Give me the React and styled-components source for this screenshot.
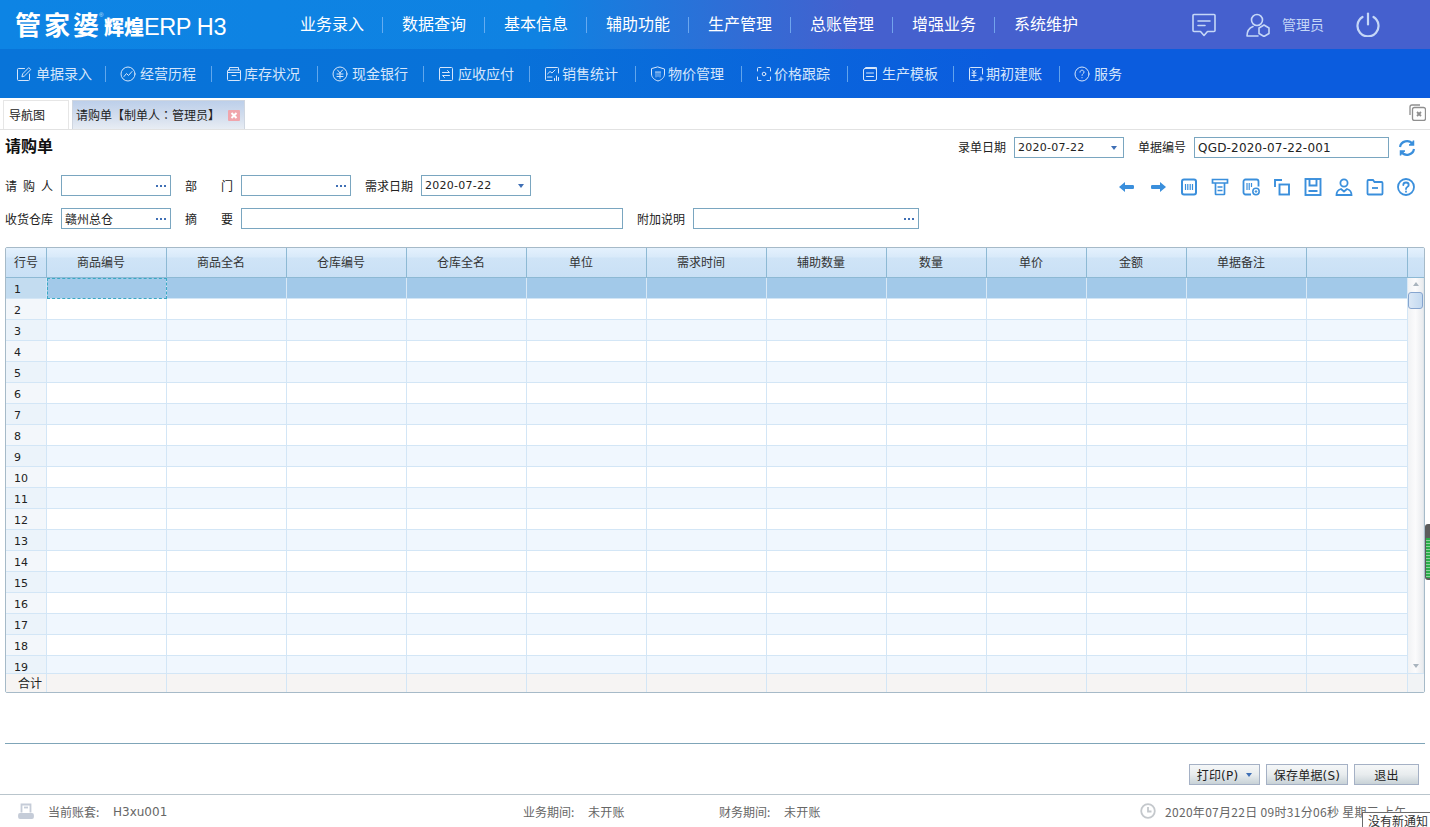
import React from 'react';
import styled, { createGlobalStyle } from 'styled-components';

const GlobalStyle = createGlobalStyle`
  html, body { margin: 0; padding: 0; height: 100%; background: #fff; }
  body { font-family: "DejaVu Sans", "Noto Sans CJK SC", sans-serif; font-size: 12px; color: #222; }
  * { box-sizing: border-box; }
`;

const CJK = `"Noto Sans CJK SC", "DejaVu Sans", sans-serif`;

// --- top bars ---
const Page = styled.div`
  position: relative;
  width: 1430px;
  height: 827px;
  overflow: hidden;
  display: flex;
  flex-direction: column;
`;

const TopBar = styled.header`
  height: 49px;
  flex: none;
  display: flex;
  align-items: center;
  padding-right: 50px;
  background: linear-gradient(90deg, #0d84e4 0%, #0f82e2 38%, #4560ce 60%, #4560ce 100%);
  color: #fff;
`;

const Logo = styled.div`
  position: relative;
  width: 280px;
  padding-left: 15px;
  display: flex;
  align-items: baseline;
  color: #fff;
  font-family: ${CJK};
  white-space: nowrap;
`;

const LogoMain = styled.span`
  font-size: 26px;
  font-weight: 700;
  letter-spacing: 3px;
  line-height: 30px;
`;

const LogoSub = styled.span`
  font-size: 20px;
  font-weight: 900;
  margin-left: 2px;
`;

const LogoProduct = styled.span`
  font-family: "Liberation Sans", sans-serif;
  font-size: 23.5px;
  letter-spacing: -0.4px;
`;

const LogoMark = styled.span`
  position: absolute;
  left: 99px;
  top: 3px;
  font-family: "Liberation Sans", sans-serif;
  font-size: 6px;
  line-height: 7px;
  color: #cfe4fb;
`;

const MainNav = styled.nav`
  display: flex;
  align-items: center;
`;

const MainNavItem = styled.a`
  width: 102px;
  height: 16px;
  padding: 0 0 4px 19px;
  display: flex;
  align-items: center;
  font-family: ${CJK};
  font-size: 16px;
  white-space: nowrap;
  border-left: 1px solid ${(p) => (p.$first ? 'transparent' : 'rgba(130, 185, 245, 0.75)')};
`;

const UserArea = styled.div`
  margin-left: auto;
  display: flex;
  align-items: center;
  color: #c5d7f7;
`;

const UserName = styled.span`
  margin: 0 32px 2px 12px;
  font-family: ${CJK};
  font-size: 14px;
`;

const SubBar = styled.div`
  height: 49px;
  flex: none;
  display: flex;
  align-items: center;
  padding-left: 1px;
  background: linear-gradient(90deg, #0874d9 0%, #0872d9 35%, #0b5cde 70%, #0b5cde 100%);
  color: #d6e6fb;
`;

const SubItem = styled.a`
  width: ${(p) => (p.$first ? 104 : 106)}px;
  height: 16px;
  padding-left: 14px;
  display: flex;
  align-items: center;
  font-family: ${CJK};
  font-size: 14px;
  white-space: nowrap;
  border-left: 1px solid ${(p) => (p.$first ? 'transparent' : 'rgba(120, 180, 240, 0.8)')};
`;

const SubLabel = styled.span`
  margin-bottom: 2px;
`;

const SubIcon = styled.span`
  width: ${(p) => p.$w}px;
  display: flex;
  flex: none;
`;

// --- tabs ---
const TabStrip = styled.div`
  height: 32px;
  flex: none;
  display: flex;
  align-items: flex-end;
  padding-left: 3px;
  border-bottom: 1px solid #e2e2e2;
`;

const Tab = styled.div`
  height: 29px;
  width: ${(p) => p.$w}px;
  margin-right: 3px;
  padding: 0 0 2px ${(p) => (p.$active ? 3 : 5)}px;
  display: flex;
  align-items: center;
  font-family: "Noto Sans CJK TC", "DejaVu Sans", sans-serif;
  font-size: 12px;
  color: #222;
  border: 1px solid ${(p) => (p.$active ? '#cfd6e0' : '#e6e6e6')};
  border-bottom: none;
  background: ${(p) => (p.$active ? 'linear-gradient(180deg, #bccfea 0%, #d5dfee 60%, #e8edf4 100%)' : '#fff')};
`;

const TabClose = styled.span`
  margin: 2px 0 0 8px;
  width: 12px;
  height: 11px;
  display: flex;
  border-radius: 1px;
  background: #f0a5ac;
`;

const TabsCloseAll = styled.span`
  margin: 0 4px 8px auto;
  display: flex;
`;

// --- bill header ---
const Body = styled.main`
  flex: 1;
  min-height: 0;
  display: flex;
  flex-direction: column;
  padding: 0 5px;
`;

const TitleRow = styled.div`
  height: 21px;
  margin-top: 7px;
  margin-bottom: 17px;
  display: flex;
  align-items: flex-start;
`;

const Title = styled.h1`
  margin: -2px 0 0;
  font-family: ${CJK};
  font-size: 16px;
  font-weight: 700;
  line-height: 20px;
  color: #111;
`;

const TitleFields = styled.div`
  margin-left: auto;
  margin-right: 9px;
  display: flex;
  align-items: center;
`;

const FormArea = styled.div`
  display: flex;
  justify-content: space-between;
  align-items: flex-start;
`;

const FormRows = styled.div`
  display: flex;
  flex-direction: column;
  gap: 12px;
`;

const FormRow = styled.div`
  display: flex;
  align-items: center;
`;

const Label = styled.label`
  width: 48px;
  margin: 0 8px ${(p) => (p.$lift ? 3 : 0)}px ${(p) => p.$gap || 0}px;
  flex: none;
  font-family: ${CJK};
  font-size: 12px;
  color: #222;
  text-align-last: justify;
  white-space: nowrap;
`;

const Field = styled.div`
  width: ${(p) => p.$w}px;
  height: 21px;
  padding: 0 3px;
  flex: none;
  display: flex;
  align-items: center;
  justify-content: space-between;
  background: #fff;
  border: 1px solid #7aa6c0;
  font-size: ${(p) => p.$size || 12}px;
  letter-spacing: ${(p) => (p.$size === 11 ? '0.25px' : '0.2px')};
  color: #222;
  white-space: nowrap;
`;

const FieldCjk = styled.span`
  font-family: ${CJK};
  letter-spacing: 0;
`;

const Dots = styled.span`
  margin-left: auto;
  margin-right: 1px;
  display: flex;
  gap: 2px;
  i {
    width: 2px;
    height: 2px;
    background: #3f6fb5;
  }
`;

const Caret = styled.span`
  margin: 1px 3px 0 auto;
  width: 0;
  height: 0;
  border-left: 3.5px solid transparent;
  border-right: 3.5px solid transparent;
  border-top: 4px solid #3f6fb5;
`;

const ButtonCaret = styled(Caret)`
  margin: 1px 0 0;
`;

const RefreshBtn = styled.span`
  margin-left: 9px;
  display: flex;
`;

const Toolbar = styled.div`
  margin-top: 3px;
  margin-right: 9px;
  display: flex;
  gap: 11px;
`;

// --- grid ---
const COLS = '41px repeat(7, 120px) repeat(3, 100px) 120px 101px';

const Grid = styled.section`
  margin-top: 18px;
  height: 446px;
  flex: none;
  display: flex;
  flex-direction: column;
  border: 1px solid #a6bac8;
  border-radius: 2px;
  overflow: hidden;
`;

const HeaderRow = styled.div`
  height: 30px;
  flex: none;
  display: flex;
  background: linear-gradient(180deg, #e4f1fd 0%, #d9eafa 30%, #cfe4f7 35%, #c9e0f5 100%);
  border-bottom: 1px solid #8db9d4;
`;

const Cols = styled.div`
  display: grid;
  grid-template-columns: ${COLS};
  height: 100%;
`;

const HeaderCell = styled.div`
  display: flex;
  align-items: center;
  justify-content: center;
  padding: 0 11px 2px 0;
  font-family: ${CJK};
  font-size: 12px;
  color: #333;
  border-right: 1px solid #8db9d4;
  &:first-child { padding-right: 0; }
`;

const BodyWrap = styled.div`
  flex: 1;
  min-height: 0;
  display: flex;
`;

const Rows = styled.div`
  width: 1402px;
  flex: none;
  overflow: hidden;
`;

const Row = styled.div`
  height: 21px;
  background: ${(p) => (p.$selected ? '#a2c9e9' : p.$alt ? '#f0f7fe' : '#fff')};
`;

const NumCell = styled.div`
  padding: 3px 0 0 8px;
  display: flex;
  align-items: center;
  font-size: 11px;
  color: #222;
  background: ${(p) => (p.$selected ? '#c3dcf0' : p.$alt ? '#ebf3fa' : '#f3f7fb')};
  border-right: 1px solid #d3e6f6;
  border-bottom: 1px solid #d3e6f6;
`;

const Cell = styled.div`
  border-right: 1px solid ${(p) => (p.$selected ? '#d8e8f6' : '#d3e6f6')};
  border-bottom: 1px solid #d3e6f6;
  outline: ${(p) => (p.$focus ? '1px dashed #3aa9c4' : 'none')};
  outline-offset: -1px;
`;

const Scrollbar = styled.div`
  flex: 1;
  display: flex;
  flex-direction: column;
  align-items: center;
  padding-top: 4px;
  background: linear-gradient(90deg, #f1f2f4 0%, #fbfbfc 50%, #e9ebee 100%);
  border-right: 1px solid #dfe5ea;
`;

const ScrollThumb = styled.div`
  width: 15px;
  height: 17px;
  margin-top: 6px;
  border: 1px solid #86a5cf;
  border-radius: 3px;
  background: linear-gradient(90deg, #dbe8f6 0%, #c3d9f0 100%);
`;

const ScrollArrow = styled.span`
  width: 0;
  height: 0;
  border-left: 3.5px solid transparent;
  border-right: 3.5px solid transparent;
  ${(p) => (p.$down
    ? 'border-top: 4px solid #a9b4be; margin-top: auto; margin-bottom: 5px;'
    : 'border-bottom: 4px solid #a9b4be;')}
`;

const FooterRow = styled.div`
  height: 19px;
  flex: none;
  display: flex;
  background: #f6f4f3;
  border-top: 1px solid #d3e6f6;
`;

const FooterLabel = styled.div`
  padding: 0 0 3px 12px;
  display: flex;
  align-items: center;
  font-family: ${CJK};
  font-size: 12px;
  color: #222;
  border-right: 1px solid #d3e6f6;
`;

const FooterCell = styled.div`
  border-right: 1px solid #d3e6f6;
`;

const FooterEnd = styled.div`
  flex: 1;
  background: #f1f3f5;
`;

// --- bottom ---
const Divider = styled.hr`
  margin: 50px 0 0;
  height: 1px;
  flex: none;
  border: none;
  background: #7fa5b8;
`;

const Actions = styled.div`
  margin-top: 20px;
  padding-right: 6px;
  display: flex;
  justify-content: flex-end;
  gap: 6px;
`;

const ActionBtn = styled.button`
  width: ${(p) => p.$w}px;
  height: 21px;
  padding: 0;
  display: flex;
  align-items: center;
  justify-content: center;
  gap: 8px;
  font-family: "DejaVu Sans", "Noto Sans CJK SC", sans-serif;
  font-size: 12px;
  letter-spacing: 0.2px;
  color: #222;
  border: 1px solid #a5b1c5;
  background: linear-gradient(180deg, #f5f7f8 0%, #e8ecee 50%, #c8d2d7 100%);
`;

const StatusBar = styled.footer`
  height: 33px;
  flex: none;
  padding-left: 18px;
  display: flex;
  align-items: center;
  font-size: 12px;
  color: #666;
  border-top: 1px solid #b9c5cc;
`;

const StatusGroup = styled.div`
  width: ${(p) => p.$w}px;
  flex: none;
  display: flex;
  align-items: center;
  white-space: nowrap;
`;

const StatusLabel = styled.span`
  font-family: ${CJK};
  width: ${(p) => p.$w}px;
  flex: none;
`;

const StatusText = styled.span`
  font-family: ${CJK};
  font-size: 12px;
  letter-spacing: 0.3px;
`;

const StatusCode = styled.span`
  margin-top: 2px;
`;

const StatusIcon = styled.span`
  width: ${(p) => p.$w}px;
  flex: none;
  display: flex;
`;

const Notice = styled.div`
  position: absolute;
  right: 0;
  bottom: 0;
  width: 68px;
  height: 15px;
  padding: 1px 0 0 5px;
  font-family: ${CJK};
  font-size: 12px;
  line-height: 14px;
  color: #333;
  white-space: nowrap;
  background: #fff;
  border-top: 1px solid #6b6b6b;
  border-left: 1px solid #6b6b6b;
`;

const SideHandle = styled.div`
  position: absolute;
  right: 0;
  top: 524px;
  width: 5px;
  height: 56px;
  border-radius: 3px 0 0 3px;
  background: repeating-linear-gradient(180deg, #2aae4a 0 2px, #8fd29f 2px 3px);
  border-top: 14px solid #5c5c5c;
  border-left: 1px solid #5c5c5c;
  border-bottom: 2px solid #5c5c5c;
`;

const MessageIcon = styled.svg`
  margin-right: 30px;
`;

// --- icons ---
const Svg = ({ size = 16, stroke = 'currentColor', sw = 1, children }) => (
  <svg width={size} height={size} viewBox="0 0 16 16" fill="none" stroke={stroke} strokeWidth={sw} strokeLinecap="round" strokeLinejoin="round">
    {children}
  </svg>
);

const subIcons = {
  edit: <><path d="M8.5 2.5H2.5a1 1 0 0 0-1 1v10a1 1 0 0 0 1 1h10a1 1 0 0 0 1-1V8" /><path d="M6 10.5l.6-2.6L12.8 1.6l2 2-6.2 6.2z" /></>,
  trend: <><circle cx="8" cy="8" r="7" /><path d="M4 10.5l2.5-3 2 2L12 5.5" /></>,
  box: <><rect x="1.5" y="4" width="13" height="10.5" rx="1" /><path d="M3.5 4V1.5h9V4M1.5 6.5h13M6 9.5h4" /></>,
  yen: <><circle cx="8" cy="8" r="7" /><path d="M5.5 4L8 7l2.5-3M5 8h6M5 10.5h6M8 7v5.5" /></>,
  swap: <><rect x="1.5" y="1.5" width="13" height="13" rx="1" /><path d="M4.5 6.5h7l-2-2M11.5 9.5h-7l2 2" /></>,
  chart: <><path d="M14.5 7V2.5a1 1 0 0 0-1-1h-11a1 1 0 0 0-1 1v11a1 1 0 0 0 1 1H8" /><path d="M3.5 8L6 5.5l2 1.5 3-3M3.5 11H8M10.5 14.5v-2M12.5 14.5V10M14.5 14.5V11.5" /></>,
  shield: <><path d="M8 1l6.5 2v5c0 3.5-3 6-6.5 7-3.5-1-6.5-3.5-6.5-7V3z" /><path d="M5.5 6h5M6 6v5M8 6v4.5M10 6v5" strokeWidth="0.7" /></>,
  scan: <><path d="M5 1.5H2.5a1 1 0 0 0-1 1V5M11 1.5h2.5a1 1 0 0 1 1 1V5M5 14.5H2.5a1 1 0 0 1-1-1V11M11 14.5h2.5a1 1 0 0 0 1-1V11" /><circle cx="8" cy="8" r="1.8" /></>,
  template: <><rect x="1.5" y="2.5" width="13" height="12" rx="1.5" /><path d="M3.5 2.5V1.5h11v9M4.5 7h7M4.5 10.5h7" /></>,
  ledger: <><path d="M14.5 8V2.5a1 1 0 0 0-1-1h-11a1 1 0 0 0-1 1v11a1 1 0 0 0 1 1H10" /><path d="M4.5 4l1.5 2 1.5-2M4 7h4M4 9.5h4M6 6v5.5M13 11v4M11 13h4" /></>,
  help: <><circle cx="8" cy="8" r="7" /><path d="M6 6.2C6 4.9 7 4.2 8 4.2s2 .8 2 1.9C10 7.6 8 7.6 8 9.4" /><path d="M8 11.6v.2" /></>,
};

const Blue = '#3a8fdc';

const toolIcons = [
  <svg key="a" width="20" height="18" viewBox="0 0 20 18" fill={Blue}><path d="M2 9l6-5v3h8c1 0 1 1 1 2s0 2-1 2H8v3z" /></svg>,
  <svg key="b" width="20" height="18" viewBox="0 0 20 18" fill={Blue}><path d="M18 9l-6-5v3H4c-1 0-1 1-1 2s0 2 1 2h8v3z" /></svg>,
  <svg key="c" width="20" height="18" viewBox="0 0 20 18" fill="none" stroke={Blue}><rect x="3" y="1.5" width="14" height="15" rx="2" strokeWidth="2" /><path d="M6.5 6v6M8.8 6v6M11.2 6v6M13.5 6v6" strokeWidth="1.2" /></svg>,
  <svg key="d" width="20" height="18" viewBox="0 0 20 18" fill="none" stroke={Blue} strokeWidth="1.7"><path d="M2.5 1.5h15v3.500h-15zM5.500 5V16a.5.5 0 0 0 .5.5h8a.5.5 0 0 0 .5-.5V5" /><path d="M7.500 9h5M7.500 12.500h5" strokeWidth="1.4" /></svg>,
  <svg key="e" width="20" height="18" viewBox="0 0 20 18" fill="none" stroke={Blue}><path d="M10 16.500H4.500a2 2 0 0 1-2-2v-11a2 2 0 0 1 2-2h11a2 2 0 0 1 2 2v5" strokeWidth="1.8" /><path d="M6 5v7M8.200 5v7M10.500 5v4" strokeWidth="1.2" /><circle cx="15" cy="13.500" r="3.200" strokeWidth="1.5" /><circle cx="15" cy="13.500" r="0.800" fill={Blue} /></svg>,
  <svg key="f" width="20" height="18" viewBox="0 0 20 18" fill="none" stroke={Blue} strokeWidth="1.9"><path d="M3 9V2h7" /><rect x="7.500" y="6.500" width="9.500" height="10" /></svg>,
  <svg key="g" width="20" height="18" viewBox="0 0 20 18" fill="none" stroke={Blue}><rect x="2.500" y="1" width="15" height="16" strokeWidth="1.9" /><path d="M6.500 1v6.500h7V1M5.500 13h9" strokeWidth="1.9" /></svg>,
  <svg key="h" width="20" height="18" viewBox="0 0 20 18" fill="none" stroke={Blue} strokeWidth="1.8"><circle cx="10" cy="5" r="3.600" /><path d="M2.500 17c0-3 1-5 4.500-6l3 2.500 3-2.500c3.500 1 4.500 3 4.500 6z" /></svg>,
  <svg key="i" width="20" height="18" viewBox="0 0 20 18" fill="none" stroke={Blue} strokeWidth="1.8"><path d="M2.500 3a1 1 0 0 1 1-1h4.500l1.500 2H16.500a1 1 0 0 1 1 1v10.500a1 1 0 0 1-1 1h-13a1 1 0 0 1-1-1z" /><path d="M7 10h6" /></svg>,
  <svg key="j" width="20" height="18" viewBox="0 0 20 18" fill="none" stroke={Blue} strokeWidth="1.8" strokeLinecap="round"><circle cx="10" cy="9" r="8" /><path d="M7.300 7C7.300 5.300 8.700 4.500 10 4.500s2.700 1 2.700 2.400c0 2-2.700 2-2.700 4.100" /><path d="M10 13.500v.3" /></svg>,
];

const MAIN_NAV = ['业务录入', '数据查询', '基本信息', '辅助功能', '生产管理', '总账管理', '增强业务', '系统维护'];

const SUB_NAV = [
  { label: '单据录入', icon: 'edit', w: 20 },
  { label: '经营历程', icon: 'trend', w: 20 },
  { label: '库存状况', icon: 'box', w: 18 },
  { label: '现金银行', icon: 'yen', w: 20 },
  { label: '应收应付', icon: 'swap', w: 20 },
  { label: '销售统计', icon: 'chart', w: 18 },
  { label: '物价管理', icon: 'shield', w: 18 },
  { label: '价格跟踪', icon: 'scan', w: 18 },
  { label: '生产模板', icon: 'template', w: 20 },
  { label: '期初建账', icon: 'ledger', w: 18 },
  { label: '服务', icon: 'help', w: 20 },
];

const COLUMNS = ['行号', '商品编号', '商品全名', '仓库编号', '仓库全名', '单位', '需求时间', '辅助数量', '数量', '单价', '金额', '单据备注', ''];

const ROWS = Array.from({ length: 19 }, (_, i) => i + 1);

const Ellipsis = () => <Dots><i /><i /><i /></Dots>;

function App() {
  return (
    <Page>
      <GlobalStyle />

      <TopBar>
        <Logo>
          <LogoMain>管家婆</LogoMain>
          <LogoMark>®</LogoMark>
          <LogoSub>辉煌</LogoSub>
          <LogoProduct>ERP H3</LogoProduct>
        </Logo>
        <MainNav>
          {MAIN_NAV.map((item, i) => (
            <MainNavItem key={item} $first={i === 0}>{item}</MainNavItem>
          ))}
        </MainNav>
        <UserArea>
          <MessageIcon width="24" height="24" viewBox="0 0 24 24" fill="none" stroke="currentColor" strokeWidth="1.6" strokeLinejoin="round">
            <path d="M2 1.500h20a1 1 0 0 1 1 1v15a1 1 0 0 1-1 1h-6.500L12 22.500 8.500 18.500H2a1 1 0 0 1-1-1v-15a1 1 0 0 1 1-1z" />
            <path d="M6 8h12M6 12.500h7" strokeLinecap="round" />
          </MessageIcon>
          <svg width="24" height="24" viewBox="0 0 24 24" fill="none" stroke="currentColor" strokeWidth="1.6" strokeLinejoin="round">
            <circle cx="11" cy="7" r="5.500" />
            <path d="M1 23c0-5 2-8 6-9.500M1 23h11" strokeLinecap="round" />
            <path d="M18 12l5 3v5.500l-5 3-5-3V15z" />
          </svg>
          <UserName>管理员</UserName>
          <svg width="24" height="25" viewBox="0 0 24 25" fill="none" stroke="currentColor" strokeWidth="2.2" strokeLinecap="round">
            <path d="M12 1.500v11" />
            <path d="M6.500 5A10.500 10.500 0 1 0 17.500 5" />
          </svg>
        </UserArea>
      </TopBar>

      <SubBar>
        {SUB_NAV.map((item, i) => (
          <SubItem key={item.label} $first={i === 0}>
            <SubIcon $w={item.w}><Svg>{subIcons[item.icon]}</Svg></SubIcon>
            <SubLabel>{item.label}</SubLabel>
          </SubItem>
        ))}
      </SubBar>

      <TabStrip>
        <Tab $w={66}>导航图</Tab>
        <Tab $w={173} $active>
          请购单【制单人：管理员】
          <TabClose>
            <svg width="12" height="11" viewBox="0 0 12 11" stroke="#fff" strokeWidth="2"><path d="M3.500 3l5 5M8.500 3l-5 5" /></svg>
          </TabClose>
        </Tab>
        <TabsCloseAll>
          <svg width="17" height="17" viewBox="0 0 17 17" fill="none" stroke="#8f8f8f" strokeWidth="1.3">
            <path d="M1 11V3a2 2 0 0 1 2-2h8" />
            <rect x="3.500" y="3.500" width="13" height="13" rx="2" fill="#fff" />
            <path d="M8 8l4 4M12 8l-4 4" strokeWidth="1.8" />
          </svg>
        </TabsCloseAll>
      </TabStrip>

      <Body>
        <TitleRow>
          <Title>请购单</Title>
          <TitleFields>
            <Label $lift>录单日期</Label>
            <Field $w={110} $size={11}>2020-07-22<Caret /></Field>
            <Label $lift $gap={14}>单据编号</Label>
            <Field $w={195}>QGD-2020-07-22-001</Field>
            <RefreshBtn>
              <svg width="18" height="18" viewBox="0 0 18 18" fill="none" stroke={Blue} strokeWidth="2.2">
                <path d="M2 8a7 7 0 0 1 12.500-3" />
                <path d="M16 10a7 7 0 0 1-12.500 3" />
                <path d="M15.500 1.500v4.500H11" strokeWidth="1.5" fill={Blue} />
                <path d="M2.500 16.500V12H7" strokeWidth="1.5" fill={Blue} />
              </svg>
            </RefreshBtn>
          </TitleFields>
        </TitleRow>

        <FormArea>
          <FormRows>
            <FormRow>
              <Label>请 购 人</Label>
              <Field $w={110}><Ellipsis /></Field>
              <Label $gap={14}>部 门</Label>
              <Field $w={110}><Ellipsis /></Field>
              <Label $gap={14}>需求日期</Label>
              <Field $w={110} $size={11}>2020-07-22<Caret /></Field>
            </FormRow>
            <FormRow>
              <Label>收货仓库</Label>
              <Field $w={110}><FieldCjk>赣州总仓</FieldCjk><Ellipsis /></Field>
              <Label $gap={14}>摘 要</Label>
              <Field $w={382} />
              <Label $gap={14}>附加说明</Label>
              <Field $w={226}><Ellipsis /></Field>
            </FormRow>
          </FormRows>
          <Toolbar>{toolIcons}</Toolbar>
        </FormArea>

        <Grid>
          <HeaderRow>
            <Cols>
              {COLUMNS.map((c, i) => <HeaderCell key={i}>{c}</HeaderCell>)}
            </Cols>
          </HeaderRow>
          <BodyWrap>
            <Rows>
              {ROWS.map((n) => {
                const selected = n === 1;
                const alt = n % 2 === 1;
                return (
                  <Row key={n} $selected={selected} $alt={alt}>
                    <Cols>
                      <NumCell $selected={selected} $alt={alt}>{n}</NumCell>
                      {COLUMNS.slice(1).map((_, i) => (
                        <Cell key={i} $selected={selected} $focus={selected && i === 0} />
                      ))}
                    </Cols>
                  </Row>
                );
              })}
            </Rows>
            <Scrollbar>
              <ScrollArrow />
              <ScrollThumb />
              <ScrollArrow $down />
            </Scrollbar>
          </BodyWrap>
          <FooterRow>
            <Cols>
              <FooterLabel>合计</FooterLabel>
              {COLUMNS.slice(1).map((_, i) => <FooterCell key={i} />)}
            </Cols>
            <FooterEnd />
          </FooterRow>
        </Grid>

        <Divider />

        <Actions>
          <ActionBtn $w={71}>打印(P)<ButtonCaret /></ActionBtn>
          <ActionBtn $w={82}>保存单据(S)</ActionBtn>
          <ActionBtn $w={65}>退出</ActionBtn>
        </Actions>
      </Body>

      <StatusBar>
        <StatusGroup $w={505}>
          <StatusIcon $w={30}>
            <svg width="16" height="16" viewBox="0 0 16 16" fill="none" stroke="#c5ccd8" strokeWidth="1.8">
              <path d="M3.500 9.500V1.500h9v8" />
              <path d="M6 4.500h4" />
              <rect x="1" y="11" width="14" height="4" rx="1" fill="#c5ccd8" />
            </svg>
          </StatusIcon>
          <StatusLabel $w={65}>当前账套:</StatusLabel>
          <StatusCode>H3xu001</StatusCode>
        </StatusGroup>
        <StatusGroup $w={196}>
          <StatusLabel $w={65}>业务期间:</StatusLabel>
          <StatusText>未开账</StatusText>
        </StatusGroup>
        <StatusGroup $w={421}>
          <StatusLabel $w={65}>财务期间:</StatusLabel>
          <StatusText>未开账</StatusText>
        </StatusGroup>
        <StatusGroup $w={280}>
          <StatusIcon $w={25}>
            <svg width="16" height="16" viewBox="0 0 16 16" fill="none" stroke="#c4c8cc" strokeWidth="1.8">
              <circle cx="8" cy="8" r="6.800" />
              <path d="M8 4v4.500h3.500" />
            </svg>
          </StatusIcon>
          <StatusText>2020年07月22日 09时31分06秒 星期三 上午</StatusText>
        </StatusGroup>
      </StatusBar>

      <Notice>没有新通知</Notice>
      <SideHandle />
    </Page>
  );
}

export default App;
